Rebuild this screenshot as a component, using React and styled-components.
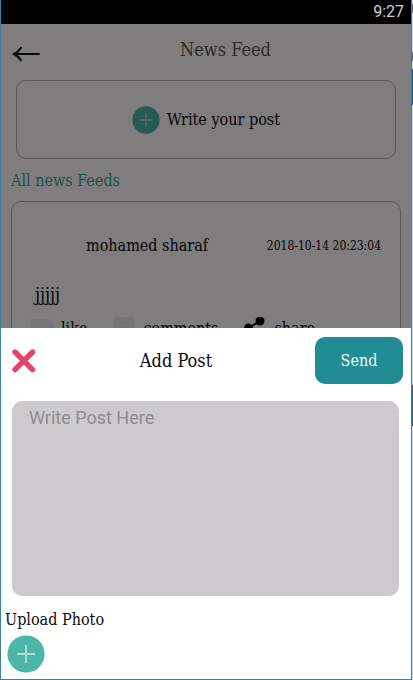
import React, { useState } from 'react'
import styled, { createGlobalStyle } from 'styled-components';

const App = () => {
  const [text, setText] = useState('')

  return (
    <>
      <GlobalStyle />
      <Desktop>
        <Device>
          <StatusBar>9:27</StatusBar>
          <Screen>
            <Header>
              <IconButton type="button" aria-label="Back">
                <ArrowIcon />
              </IconButton>
              <Title>News Feed</Title>
            </Header>
            <WriteButton type="button">
              <PlusIcon size={28} />
              Write your post
            </WriteButton>
            <SectionTitle>All news Feeds</SectionTitle>
            <Post>
              <PostHead>
                <Author>mohamed sharaf</Author>
                <PostDate>2018-10-14 20:23:04</PostDate>
              </PostHead>
              <PostText>jjjjj</PostText>
              <Actions>
                <Action type="button"><LikeIcon />like</Action>
                <Action type="button"><CommentIcon />comments</Action>
                <Action type="button"><ShareIcon />share</Action>
              </Actions>
            </Post>
            <Backdrop>
              <Sheet role="dialog" aria-labelledby="sheet-title">
                <SheetHead>
                  <IconButton type="button" aria-label="Close">
                    <CloseIcon />
                  </IconButton>
                  <SheetTitle id="sheet-title">Add Post</SheetTitle>
                  <SendButton type="button">Send</SendButton>
                </SheetHead>
                <PostInput
                  aria-label="Write Post Here"
                  placeholder="Write Post Here"
                  value={text}
                  onChange={(e) => setText(e.target.value)}
                />
                <Upload>
                  <UploadLabel id="upload-label">Upload Photo</UploadLabel>
                  <IconButton type="button" aria-labelledby="upload-label">
                    <PlusIcon size={38} />
                  </IconButton>
                </Upload>
              </Sheet>
            </Backdrop>
          </Screen>
        </Device>
      </Desktop>
    </>
  )
};

const ArrowIcon = () => (
  <svg width="28" height="16" viewBox="0 0 28 16" fill="none" stroke="#12121c" strokeWidth="2" strokeLinecap="round" strokeLinejoin="round">
    <path d="M1.5 8h25.5M9 1.8Q6.5 6 1.5 8Q6.5 10 9 14.2" />
  </svg>
)

const PlusIcon = ({ size }) => (
  <svg width={size} height={size} viewBox="0 0 38 38">
    <circle cx="19" cy="19" r="18.6" fill="#4db6a8" />
    <path d="M19 10v18M10 19h18" stroke="#a9e2da" strokeWidth="1.8" />
  </svg>
)

const CloseIcon = () => (
  <svg width="26" height="26" viewBox="0 0 26 26" fill="none" stroke="#e0456a" strokeWidth="5.4" strokeLinecap="round">
    <path d="M4 4l17.6 17.6M21.6 4L4 21.6" />
  </svg>
)

const LikeIcon = () => (
  <svg width="22" height="22" viewBox="0 0 22 22" fill="#efebee">
    <path d="M0 2h17l5 4v15H0z" />
  </svg>
)

const CommentIcon = () => (
  <svg width="22" height="22" viewBox="0 0 22 22" fill="#efebee">
    <path d="M2 0h18a2 2 0 0 1 2 2v14a2 2 0 0 1-2 2H9l-5 4v-4H0V2a2 2 0 0 1 2-2z" />
    <path d="M6 6h10M6 10h10" stroke="#e6e2e5" strokeWidth="2" />
  </svg>
)

const ShareIcon = () => (
  <svg width="22" height="22" viewBox="0 0 22 22">
    <path d="M16 4L4.5 11l11.5 7" fill="none" stroke="#000" strokeWidth="2" />
    <circle cx="16" cy="4" r="4.5" />
    <circle cx="4.5" cy="11" r="4.5" />
    <circle cx="16" cy="18" r="4" />
  </svg>
)

const GlobalStyle = createGlobalStyle`
  * {
    box-sizing: border-box;
  }
  body {
    margin: 0;
    color: #0a0a0e;
    font-family: "DejaVu Serif Condensed", "DejaVu Serif", serif;
    font-size: 16px;
  }
  button {
    font: inherit;
    color: inherit;
    cursor: pointer;
  }
`;

/* the window behind the emulator shows along the right edge */
const Desktop = styled.div`
  min-height: 100vh;
  display: flex;
  padding-right: 1px;
  background: linear-gradient(
    #c8dced 4px, #5c6b7c 4px 13px, #c8dced 13px 52px, #5c6b7c 52px 61px,
    #c8dced 61px 69px, #005a94 69px 105px, #c8dced 105px 385px,
    #1f6670 385px 426px, #c8dced 426px
  );
`;

const Device = styled.div`
  flex: 1;
  height: 100vh;
  display: flex;
  flex-direction: column;
  border: solid #3c7f9f;
  border-width: 0 1px 1px;
  background: #fff;
`;

const StatusBar = styled.div`
  height: 24px;
  padding-right: 7px;
  background: #000;
  color: #cfcfcf;
  font-family: Roboto, sans-serif;
  font-size: 16px;
  line-height: 24px;
  text-align: right;
`;

const Screen = styled.main`
  flex: 1;
  min-height: 0;
  position: relative;
  display: flex;
  flex-direction: column;
  overflow: hidden;
  background: #fffbfd;
`;

const Header = styled.header`
  flex: none;
  height: 56px;
  display: flex;
  align-items: center;
  padding: 4px 0 0 11px;
`;

const IconButton = styled.button`
  display: flex;
  padding: 0;
  border: 0;
  background: none;
`;

const Title = styled.h1`
  flex: 1;
  margin: 0;
  padding-bottom: 10px;
  color: #5c565c;
  font-size: 18px;
  font-weight: normal;
  text-align: center;
`;

const WriteButton = styled.button`
  flex: none;
  height: 79px;
  margin: 0 15px;
  display: flex;
  align-items: center;
  justify-content: center;
  gap: 7px;
  border: 1px solid #b4b0b4;
  border-radius: 10px;
  background: none;
`;

const SectionTitle = styled.h2`
  margin: 0;
  padding: 11px 10px 9px;
  color: #46a090;
  font-size: 16px;
  font-weight: normal;
  line-height: 22px;
`;

const Post = styled.article`
  flex: none;
  margin: 0 10px;
  padding: 24px 19px;
  border: 1px solid #b4b0b4;
  border-radius: 10px;
`;

const PostHead = styled.div`
  display: flex;
  align-items: center;
  justify-content: space-between;
  padding-left: 55px;
  line-height: 40px;
`;

const Author = styled.span`
  font-size: 16px;
`;

const PostDate = styled.time`
  font-size: 12px;
`;

const PostText = styled.p`
  margin: 17px 4px 10px;
  font-size: 18px;
  line-height: 24px;
`;

const Actions = styled.div`
  display: flex;
  gap: 26px;
`;

const Action = styled.button`
  display: flex;
  align-items: center;
  gap: 8px;
  padding: 0;
  border: 0;
  background: none;
`;

/* dims the feed and keeps the sheet on the bottom edge */
const Backdrop = styled.div`
  position: absolute;
  inset: 0;
  display: flex;
  align-items: flex-end;
  background: rgba(0, 0, 0, 0.5);
`;

const Sheet = styled.section`
  flex: 1;
  padding: 9px 8px 6px 4px;
  background: #fff;
`;

const SheetHead = styled.div`
  display: flex;
  align-items: center;
  padding-left: 6px;
`;

const SheetTitle = styled.h2`
  flex: 1;
  margin: 0;
  font-size: 18px;
  font-weight: normal;
  text-align: center;
`;

const SendButton = styled.button`
  width: 88px;
  height: 47px;
  border: 0;
  border-radius: 10px;
  background: #218c93;
  color: #f2fafa;
`;

const PostInput = styled.textarea`
  display: block;
  width: calc(100% - 11px);
  height: 195px;
  margin: 17px 0 13px 7px;
  padding: 5px 17px;
  border: 0;
  border-radius: 10px;
  outline: 0;
  resize: none;
  background: #cdcacd;
  color: #222;
  font-family: Roboto, sans-serif;
  font-size: 18px;
  line-height: 24px;
  &::placeholder {
    color: #8f8c8f;
  }
`;

const Upload = styled.div`
  display: flex;
  flex-direction: column;
  align-items: flex-start;
  gap: 4px;
  & > button {
    margin-left: 2px;
  }
`;

const UploadLabel = styled.span`
  line-height: 22px;
`;

export default App
